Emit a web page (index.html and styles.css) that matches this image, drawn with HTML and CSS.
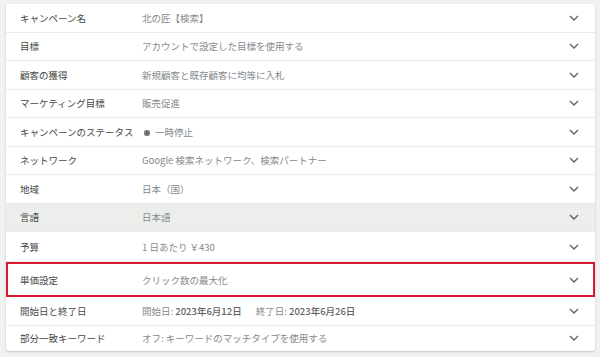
FILE: index.html
```html
<!DOCTYPE html>
<html lang="ja">
<head>
<meta charset="utf-8">
<link rel="stylesheet" href="styles.css">
</head>
<body>
<div class="card">
  <div class="row"><div class="label">キャンペーン名</div><div class="value">北の匠【検索】</div><svg class="chev" viewBox="0 0 10 6"><path d="M1 1l4 4 4-4"/></svg></div>
  <div class="row"><div class="label">目標</div><div class="value">アカウントで設定した目標を使用する</div><svg class="chev" viewBox="0 0 10 6"><path d="M1 1l4 4 4-4"/></svg></div>
  <div class="row"><div class="label">顧客の獲得</div><div class="value">新規顧客と既存顧客に均等に入札</div><svg class="chev" viewBox="0 0 10 6"><path d="M1 1l4 4 4-4"/></svg></div>
  <div class="row"><div class="label">マーケティング目標</div><div class="value">販売促進</div><svg class="chev" viewBox="0 0 10 6"><path d="M1 1l4 4 4-4"/></svg></div>
  <div class="row"><div class="label">キャンペーンのステータス</div><div class="value"><span class="dot"></span>一時停止</div><svg class="chev" viewBox="0 0 10 6"><path d="M1 1l4 4 4-4"/></svg></div>
  <div class="row"><div class="label">ネットワーク</div><div class="value">Google 検索ネットワーク、検索パートナー</div><svg class="chev" viewBox="0 0 10 6"><path d="M1 1l4 4 4-4"/></svg></div>
  <div class="row"><div class="label">地域</div><div class="value">日本（国）</div><svg class="chev" viewBox="0 0 10 6"><path d="M1 1l4 4 4-4"/></svg></div>
  <div class="row row-hover"><div class="label">言語</div><div class="value">日本語</div><svg class="chev" viewBox="0 0 10 6"><path d="M1 1l4 4 4-4"/></svg></div>
  <div class="row row-budget"><div class="label">予算</div><div class="value">1 日あたり ￥430</div><svg class="chev" viewBox="0 0 10 6"><path d="M1 1l4 4 4-4"/></svg></div>
  <div class="row row-marked"><div class="label">単価設定</div><div class="value">クリック数の最大化</div><svg class="chev" viewBox="0 0 10 6"><path d="M1 1l4 4 4-4"/></svg></div>
  <div class="row"><div class="label">開始日と終了日</div><div class="value">開始日: <b>2023年6月12日</b><span class="gap"></span>終了日: <b>2023年6月26日</b></div><svg class="chev" viewBox="0 0 10 6"><path d="M1 1l4 4 4-4"/></svg></div>
  <div class="row row-last"><div class="label">部分一致キーワード</div><div class="value">オフ: キーワードのマッチタイプを使用する</div><svg class="chev" viewBox="0 0 10 6"><path d="M1 1l4 4 4-4"/></svg></div>
</div>
</body>
</html>
```
FILE: styles.css
```css
html, body {
  margin: 0;
  padding: 0;
  background: #f1f1f1;
}
body {
  padding: 4px 5px 0 6px;
  font-family: "Noto Sans CJK JP", "Noto Sans", sans-serif;
  font-size: 9.5px;
  width: 600px;
  height: 357px;
  box-sizing: border-box;
}
.card {
  background: #fff;
  border-radius: 2px;
  box-shadow: 0 1px 2px rgba(0,0,0,0.18), 0 0 1px rgba(0,0,0,0.12);
  overflow: hidden;
}
.row {
  display: flex;
  align-items: center;
  height: 28.5px;
  box-sizing: border-box;
  border-bottom: 1px solid #ebebeb;
  padding-left: 14px;
  padding-right: 16px;
}
.label {
  width: 122px;
  flex: none;
  color: #444746;
  white-space: nowrap;
}
.value {
  flex: 1;
  color: #85898d;
  white-space: nowrap;
}
.value b {
  color: #5f6368;
  font-weight: 500;
}
.gap { width: 14px; display: inline-block; }
.chev {
  width: 10px;
  height: 6px;
  flex: none;
  fill: none;
  stroke: #5f6368;
  stroke-width: 1.4;
}
.dot {
  width: 6px;
  height: 6px;
  border-radius: 50%;
  background: #5f6368;
  box-shadow: inset 0 0 0 1.5px #80868b;
  margin: 0 5px 0 2px;
  display: inline-block;
  vertical-align: -0.5px;
}
.row-hover { background: #eceeec; }
.row-budget { height: 30px; }
.row-marked {
  height: 35px;
  border: 2px solid #d8192f;
  padding-left: 12px;
  padding-right: 14px;
}
.row-last { height: 25px; border-bottom: none; }
```
